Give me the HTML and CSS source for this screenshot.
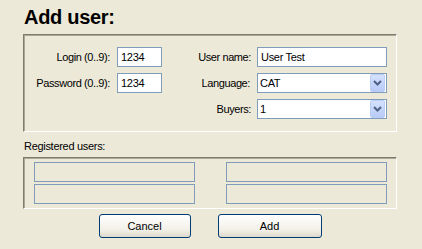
FILE: index.html
```html
<!DOCTYPE html>
<html lang="en">
<head>
  <meta charset="UTF-8" />
  <title>Add user</title>
  <link rel="stylesheet" href="styles.css">
</head>
<body>
  <div class="dialog">
    <h1>Add user:</h1>

    <div class="panel form-grid">
      <label class="lbl" for="login">Login (0..9):</label>
      <input class="field" id="login" type="text" value="1234" />
      <label class="lbl" for="username">User name:</label>
      <input class="field" id="username" type="text" value="User Test" />

      <label class="lbl" for="password">Password (0..9):</label>
      <input class="field" id="password" type="text" value="1234" />
      <span class="lbl">Language:</span>
      <div class="combo">
        <span class="combo-text">CAT</span>
        <span class="combo-btn">
          <svg width="9" height="6" viewBox="0 0 9 6"><polyline points="1,1 4.5,4.5 8,1" fill="none" stroke="#4d6185" stroke-width="2"/></svg>
        </span>
      </div>

      <span class="lbl buyers-lbl">Buyers:</span>
      <div class="combo">
        <span class="combo-text">1</span>
        <span class="combo-btn">
          <svg width="9" height="6" viewBox="0 0 9 6"><polyline points="1,1 4.5,4.5 8,1" fill="none" stroke="#4d6185" stroke-width="2"/></svg>
        </span>
      </div>
    </div>

    <div class="section-title">Registered users:</div>
    <div class="panel users-grid">
      <div class="slot"></div>
      <div class="slot"></div>
      <div class="slot"></div>
      <div class="slot"></div>
    </div>

    <div class="actions">
      <button class="btn btn-cancel">Cancel</button>
      <button class="btn btn-add">Add</button>
    </div>
  </div>
</body>
</html>
```

FILE: styles.css
```css
html, body {
  margin: 0;
  padding: 0;
  background: #ece9d8;
}
body {
  font-family: 'Liberation Sans', Arial, sans-serif;
  font-size: 11px;
  color: #000;
}
.dialog {
  width: 374px;
  padding: 0 0 0 23px;
}
h1 {
  font-size: 20px;
  font-weight: bold;
  line-height: 22px;
  margin: 6px 0 6px 1px;
  letter-spacing: -0.3px;
}
.panel {
  box-sizing: border-box;
  width: 374px;
  border: 1px solid;
  border-color: #7f7c6e #fff #fff #7f7c6e;
  box-shadow: inset 1px 1px 0 #aca899;
}
.form-grid {
  display: grid;
  grid-template-columns: 92px 45px 95px 130px;
  grid-auto-rows: 20px;
  row-gap: 6px;
  padding: 12px 0 12px 1px;
}
.lbl {
  text-align: right;
  line-height: 20px;
  padding-right: 7px;
  letter-spacing: -0.4px;
  white-space: nowrap;
}
.form-grid .lbl:nth-of-type(even),
.buyers-lbl {
  padding-right: 6px;
}
.buyers-lbl {
  grid-column: 3;
}
.field, .combo {
  box-sizing: border-box;
  height: 20px;
  margin: 0;
  border: 1px solid #7f9db9;
  background: #fff;
  font-family: inherit;
  font-size: 11px;
  line-height: 18px;
  padding: 0 3px;
  letter-spacing: -0.3px;
  color: #000;
  outline: none;
}
.combo {
  display: flex;
  align-items: stretch;
  padding: 0 1px 0 2px;
}
.combo-text {
  flex: 1;
}
.combo-btn {
  width: 15px;
  display: flex;
  align-items: center;
  justify-content: center;
  background: linear-gradient(#d4e1fd, #b8cbf7);
  border: 1px solid #bccdf5;
  box-sizing: border-box;
  border-radius: 2px;
}
.section-title {
  margin: 7px 0 4px 1px;
  line-height: 14px;
  letter-spacing: -0.3px;
}
.users-grid {
  display: grid;
  grid-template-columns: 161px 161px;
  grid-auto-rows: 20px;
  column-gap: 31px;
  row-gap: 2px;
  padding: 4px 0 4px 10px;
}
.slot {
  border: 1px solid #7f9db9;
}
.actions {
  display: flex;
  justify-content: center;
  gap: 27px;
  margin-top: 5px;
}
.btn {
  height: 24px;
  border: 1px solid #003c74;
  border-radius: 3px;
  background: linear-gradient(#fff, #f1efe6 70%, #dcd8cb);
  font-family: inherit;
  font-size: 11px;
  color: #000;
  padding: 0;
}
.btn-cancel {
  width: 92px;
}
.btn-add {
  width: 104px;
}
```
